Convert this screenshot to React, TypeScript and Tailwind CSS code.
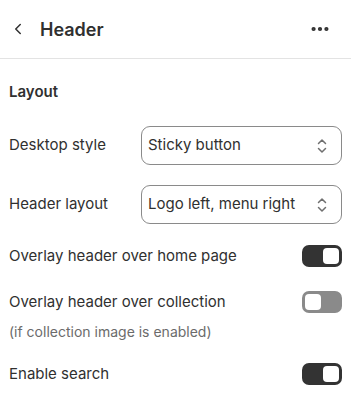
import { ChevronLeft, MoreHorizontal } from "lucide-react";

function Select({ value }: { value: string }) {
  return (
    <div className="w-[201px] h-[39px] flex items-center justify-between pl-[6px] pr-[14px] border border-[#8a8a8a] rounded-[9px] text-[15px] text-[#303030]">
      <span>{value}</span>
      <svg width="10" height="16" viewBox="0 0 10 16" fill="none" stroke="#6f6f6f" strokeWidth="1.5" strokeLinecap="round" strokeLinejoin="round">
        <path d="M1.5 5.5 5 2l3.5 3.5" />
        <path d="M1.5 10.5 5 14l3.5-3.5" />
      </svg>
    </div>
  );
}

function Toggle({ on }: { on: boolean }) {
  return (
    <div className={`w-[40px] h-[22px] rounded-[7px] p-[3px] flex ${on ? "bg-[#333333] justify-end" : "bg-[#8a8a8a] justify-start"}`}>
      <div className="w-[16px] h-[16px] rounded-[4px] bg-white" />
    </div>
  );
}

export default function App() {
  return (
    <div className="w-[351px] h-[401px] bg-white font-['Inter',sans-serif] text-[#303030] overflow-hidden">
      <div className="h-[59px] border-b border-[#e3e3e3] flex items-center px-[9px]">
        <ChevronLeft className="w-[18px] h-[18px] text-[#303030]" strokeWidth={2} />
        <h1 className="ml-[13px] text-[18px] font-semibold">Header</h1>
        <MoreHorizontal className="ml-auto mr-[11px] w-[22px] h-[22px] text-[#303030]" strokeWidth={2.6} />
      </div>
      <div className="px-[9px] pt-[23px]">
        <h2 className="text-[15px] font-semibold leading-[20px]">Layout</h2>
        <div className="mt-[24px] flex items-center justify-between">
          <span className="text-[15px]">Desktop style</span>
          <Select value="Sticky button" />
        </div>
        <div className="mt-[20px] flex items-center justify-between">
          <span className="text-[15px]">Header layout</span>
          <Select value="Logo left, menu right" />
        </div>
        <div className="mt-[21px] flex items-center justify-between">
          <span className="text-[15px]">Overlay header over home page</span>
          <Toggle on />
        </div>
        <div className="mt-[23px] flex items-center justify-between">
          <span className="text-[15px]">Overlay header over collection</span>
          <Toggle on={false} />
        </div>
        <p className="mt-[8px] text-[14px] text-[#6b6b6b]">(if collection image is enabled)</p>
        <div className="mt-[21px] flex items-center justify-between">
          <span className="text-[15px]">Enable search</span>
          <Toggle on />
        </div>
      </div>
    </div>
  );
}
